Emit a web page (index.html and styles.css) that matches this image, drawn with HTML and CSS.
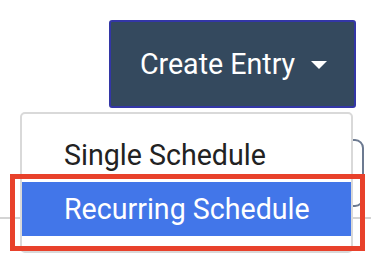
FILE: index.html
```html
<!DOCTYPE html>
<html>
<head lang="en">
  <meta charset="UTF-8">
  <title>Create Entry</title>
  <link rel="stylesheet" href="styles.css">
</head>
<body>
  <div class="toolbar">
    <div class="menu-wrap">
      <button class="create">Create Entry<span class="caret"></span></button>
      <ul class="dropdown">
        <li>Single Schedule</li>
        <li class="active">Recurring Schedule</li>
      </ul>
    </div>
  </div>
  <div class="filters">
    <div class="filter-box"></div>
  </div>
  <div class="divider"></div>
  <div class="highlight"></div>
</body>
</html>
```

FILE: styles.css
```css
* {
  margin: 0;
  padding: 0;
  box-sizing: border-box;
}
body {
  width: 371px;
  height: 258px;
  background: #fff;
  font-family: Roboto, "Liberation Sans", sans-serif;
  overflow: hidden;
  position: relative;
}
ul {
  list-style: none;
}
.toolbar {
  display: flex;
  justify-content: flex-end;
  padding: 20px 15px 0 0;
}
.menu-wrap {
  position: relative;
}
.create {
  width: 247px;
  height: 88px;
  display: flex;
  align-items: center;
  justify-content: center;
  gap: 16px;
  padding-left: 2px;
  background: #34495e;
  border: 2px solid #3336a6;
  border-radius: 3px;
  color: #fff;
  font-family: Roboto, "Liberation Sans", sans-serif;
  font-size: 28.6px;
}
.caret {
  width: 0;
  height: 0;
  border-left: 8px solid transparent;
  border-right: 8px solid transparent;
  border-top: 8px solid #fff;
  margin-top: 2px;
}
.dropdown {
  position: absolute;
  top: 92px;
  left: -89px;
  width: 333px;
  padding: 14px 0 15px;
  background: #fff;
  border: 2px solid #d9d9d9;
  border-radius: 5px;
  z-index: 2;
}
.dropdown li {
  height: 54px;
  line-height: 54px;
  padding-left: 42px;
  font-size: 28.6px;
  color: #222;
}
.dropdown li.active {
  background: #4276e9;
  color: #fff;
}
.filters {
  display: flex;
  justify-content: flex-end;
  padding: 31px 7px 0 0;
}
.filter-box {
  width: 160px;
  height: 68px;
  border: 2px solid #6c7a91;
  border-radius: 9px;
}
.divider {
  margin-top: 10px;
  height: 2px;
  background: #d4d4d4;
}
.highlight {
  position: absolute;
  left: 10px;
  top: 174px;
  width: 355px;
  height: 77px;
  border: 5px solid #e8412b;
  z-index: 3;
}
```
